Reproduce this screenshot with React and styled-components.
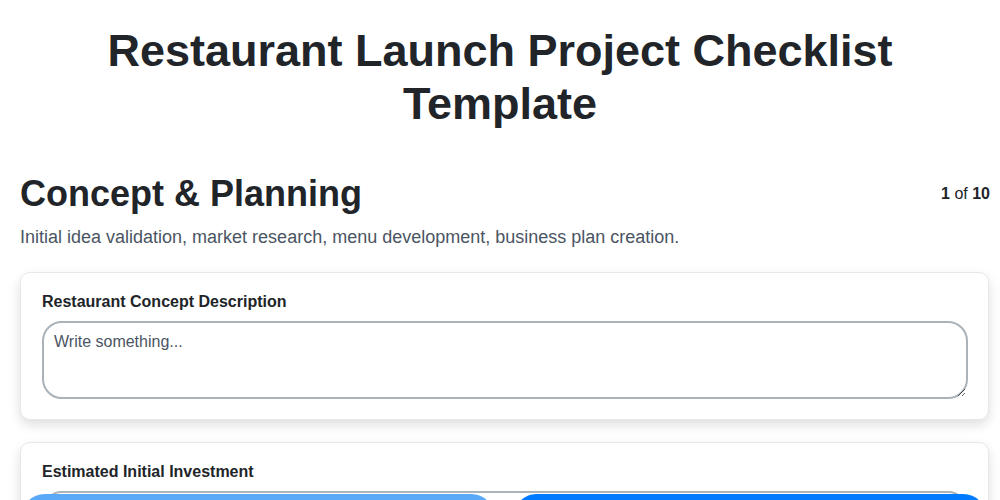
import React from "react";
import styled, { createGlobalStyle } from "styled-components";

const Global = createGlobalStyle`
  html, body { margin: 0; padding: 0; background: #ffffff; }
  body { font-family: "Liberation Sans", Arial, sans-serif; color: #212529; }
  * { box-sizing: border-box; }
`;

const Page = styled.div`
  padding: 24px 0 80px 0;
`;

const Title = styled.h1`
  margin: 0 0 42px 0;
  text-align: center;
  font-size: 45px;
  line-height: 53px;
  font-weight: 700;
  color: #212529;
  padding: 0 60px;
`;

const Content = styled.main`
  padding: 0 10px 0 20px;
`;

const StepHeader = styled.div`
  display: flex;
  justify-content: space-between;
  align-items: center;
`;

const StepTitle = styled.h2`
  margin: 0;
  font-size: 36px;
  line-height: 44px;
  font-weight: 700;
  color: #212529;
`;

const Counter = styled.div`
  font-size: 16px;
  color: #212529;
  b { font-weight: 700; }
`;

const Description = styled.p`
  margin: 9px 0 22px 0;
  font-size: 18px;
  line-height: 25px;
  color: #4a5563;
`;

const Card = styled.div`
  background: #fff;
  border: 1px solid #e7e7ee;
  border-radius: 10px;
  box-shadow: 0 5px 12px rgba(0, 0, 0, 0.13);
  padding: 19px 20px 20px 21px;
  margin: 0 1px 22px 0;
`;

const Label = styled.label`
  display: block;
  font-size: 16px;
  line-height: 20px;
  font-weight: 700;
  color: #212529;
  margin-bottom: 9px;
`;

const TextArea = styled.textarea`
  display: block;
  width: 100%;
  height: 78px;
  border: 2px solid #aab2ba;
  border-radius: 20px;
  padding: 9px 10px;
  font-family: "Liberation Sans", Arial, sans-serif;
  font-size: 16px;
  line-height: 20px;
  color: #212529;
  background: #fff;
  &::placeholder { color: #4a5563; opacity: 1; }
`;

const Input = styled.input`
  display: block;
  width: 100%;
  height: 44px;
  border: 2px solid #aab2ba;
  border-radius: 20px;
  padding: 0 10px;
  font-family: "Liberation Sans", Arial, sans-serif;
  font-size: 16px;
  background: #fff;
`;

const Footer = styled.div`
  position: fixed;
  left: 21px;
  right: 13px;
  top: 494px;
  display: flex;
  gap: 18px;
`;

const NavButton = styled.button`
  flex: 1;
  height: 48px;
  border: none;
  border-radius: 24px;
  background: ${(p) => (p.$primary ? "#007bff" : "#5aa9f8")};
  color: #fff;
`;

export default function App() {
  return (
    <>
      <Global />
      <Page>
        <Title>Restaurant Launch Project Checklist Template</Title>
        <Content>
          <StepHeader>
            <StepTitle>Concept &amp; Planning</StepTitle>
            <Counter>
              <b>1</b> of <b>10</b>
            </Counter>
          </StepHeader>
          <Description>
            Initial idea validation, market research, menu development, business plan creation.
          </Description>
          <Card>
            <Label>Restaurant Concept Description</Label>
            <TextArea placeholder="Write something..." />
          </Card>
          <Card>
            <Label>Estimated Initial Investment</Label>
            <Input type="text" />
          </Card>
        </Content>
      </Page>
      <Footer>
        <NavButton aria-label="Previous" />
        <NavButton $primary aria-label="Next" />
      </Footer>
    </>
  );
}
